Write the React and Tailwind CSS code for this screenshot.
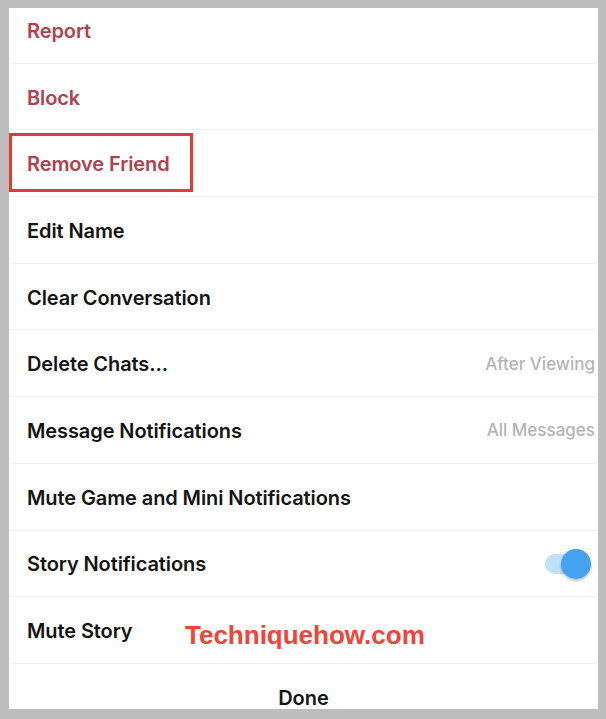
const rows = [
    { label: 'Report', danger: true },
    { label: 'Block', danger: true },
    { label: 'Remove Friend', danger: true, boxed: true },
    { label: 'Edit Name' },
    { label: 'Clear Conversation' },
    { label: 'Delete Chats...', value: 'After Viewing' },
    { label: 'Message Notifications', value: 'All Messages' },
    { label: 'Mute Game and Mini Notifications' },
    { label: 'Story Notifications', toggle: true },
    { label: 'Mute Story', watermark: true },
];

function Toggle() {
    return (
        <div className="relative w-[46px] h-[30px] mr-[7px] flex items-center">
            <div className="w-[36px] h-[20px] rounded-full bg-[#bfe1f8]" />
            <div className="absolute right-0 top-0 w-[30px] h-[30px] rounded-full bg-[#44a2ee] shadow-[0_2px_3px_rgba(0,0,0,0.25)]" />
        </div>
    );
}

export default function App() {
    return (
        <div className="w-[606px] h-[719px] bg-[#bdbdbd] pt-[8px] pl-[9px] pr-[8px] pb-[10px]">
            <div className="h-full bg-white overflow-hidden font-['Inter',sans-serif]">
                <div className="-mt-[11px]">
                    {rows.map((row) => (
                        <div
                            key={row.label}
                            className="relative h-[66.7px] flex items-center justify-between pl-[18px] pt-[2px] border-b border-[#f1f1f1]"
                        >
                            <span
                                className={`text-[20px] font-semibold tracking-[-0.1px] ${
                                    row.danger ? 'text-[#b2404f]' : 'text-[#141414]'
                                }`}
                            >
                                {row.label}
                            </span>
                            {row.value && (
                                <span className="pr-[3px] text-[17px] font-medium text-[#b4b4b4]">
                                    {row.value}
                                </span>
                            )}
                            {row.toggle && <Toggle />}
                            {row.boxed && (
                                <div className="absolute left-0 top-[3px] w-[184px] h-[59px] border-[3px] border-[#e53935]" />
                            )}
                            {row.watermark && (
                                <span className="absolute left-[176px] top-[19px] font-['Liberation_Sans',Arial,sans-serif] font-bold text-[26px] text-[#ef4438]">
                                    Techniquehow.com
                                </span>
                            )}
                        </div>
                    ))}
                    <div className="h-[66.7px] flex items-center justify-center pt-[2px]">
                        <span className="text-[20px] font-semibold text-[#141414]">Done</span>
                    </div>
                </div>
            </div>
        </div>
    );
}
